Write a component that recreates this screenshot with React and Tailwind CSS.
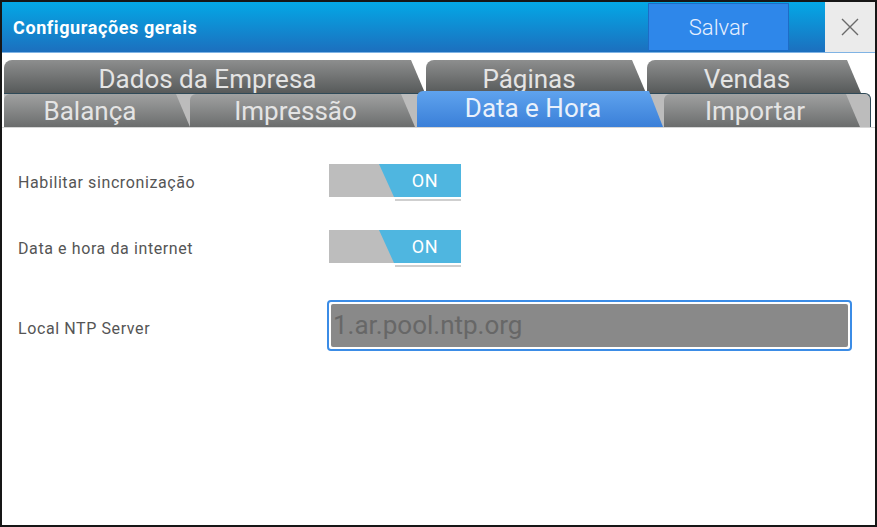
import React from "react";

const FONT = { fontFamily: "Roboto, 'Noto Sans', sans-serif" };

const backTabs = [
  { label: "Dados da Empresa", cls: "w-[421px]" },
  { label: "Páginas", cls: "w-[220px] ml-[1px]" },
  { label: "Vendas", cls: "w-[214px] ml-[1px]" },
];

const frontTabs = [
  { label: "Balança", cls: "w-[186px]" },
  { label: "Impressão", cls: "w-[225px]" },
  { label: "Data e Hora", cls: "w-[246px] ml-[2px]", active: true },
  { label: "Importar", cls: "w-[196px] ml-[1px]" },
];

const SLANT =
  "[clip-path:polygon(0_0,calc(100%_-_14px)_0,100%_100%,0_100%)] pr-[14px]";

const Toggle = () => (
  <div className="flex flex-col">
    <div className="relative w-[132px] h-[33px] bg-[#bdbdbd]">
      <div className="absolute inset-0 bg-[#4fb6e0] [clip-path:polygon(50px_0,100%_0,100%_100%,65px_100%)] flex items-center justify-center pl-[60px] text-[18px] text-white">
        ON
      </div>
    </div>
    <div className="ml-[66px] mt-[2px] w-[66px] h-[2px] bg-[#cfcfcf]" />
  </div>
);

export default function App() {
  return (
    <div
      className="w-[877px] h-[527px] bg-[#161616] p-[2px] flex flex-col overflow-hidden"
      style={FONT}
    >
      {/* cabeçalho */}
      <header className="h-[50px] flex shrink-0 bg-[linear-gradient(#03a8e6,#1c6fbe)]">
        <div className="flex-1 flex items-center pl-[11px] text-white font-bold text-[18px] tracking-[0.6px]">
          Configurações gerais
        </div>
        <button className="mt-[1px] w-[141px] h-[48px] bg-[#2e87ea] border border-[#1d6cc6] text-[22px] font-light text-[#e6f0ff]">
          Salvar
        </button>
        <div className="ml-[36px] w-[50px] bg-[#ebebeb] flex items-center justify-center">
          <svg width="22" height="22" viewBox="0 0 22 22">
            <path
              d="M3 3 L19 19 M19 3 L3 19"
              stroke="#6a6a6a"
              strokeWidth="1.4"
              fill="none"
            />
          </svg>
        </div>
      </header>

      <div className="flex-1 bg-white flex flex-col border-t border-[#7fb3e4]">
        {/* abas de trás */}
        <div className="flex h-[33px] mt-[7px] pl-[2px]">
          {backTabs.map((t) => (
            <div
              key={t.label}
              className={`${t.cls} ${SLANT} h-[33px] rounded-tl-[8px] bg-[linear-gradient(#8d8e8e,#575a5a)] text-[#e4e4e4] text-[26px] leading-[33px] pt-[3px] text-center overflow-hidden`}
            >
              {t.label}
            </div>
          ))}
        </div>

        {/* abas da frente */}
        <div className="flex items-end h-[34px] ml-[2px] w-[867px] bg-[#bcbcbc] border-t border-r border-[#2f4a58] rounded-tr-[6px]">
          {frontTabs.map((t) => (
            <div
              key={t.label}
              className={`${t.cls} ${SLANT} rounded-tl-[6px] text-[26px] text-center overflow-hidden ${
                t.active
                  ? "h-[36px] leading-[34px] bg-[linear-gradient(#5fa3ee,#3a7fd8)] text-[#eaf1fb]"
                  : "h-[33px] leading-[33px] pt-[1px] bg-[linear-gradient(#a0a1a1,#6b6d6d)] text-[#e4e4e4]"
              }`}
            >
              {t.label}
            </div>
          ))}
        </div>

        {/* conteúdo */}
        <div className="flex-1 flex flex-col border-t border-[#d6d6d6] pl-[16px] pt-[36px] text-[16px] tracking-[0.6px] text-[#555]">
          <div className="flex items-center">
            <span className="w-[311px]">Habilitar sincronização</span>
            <Toggle />
          </div>
          <div className="flex items-center mt-[29px]">
            <span className="w-[311px]">Data e hora da internet</span>
            <Toggle />
          </div>
          <div className="flex items-center mt-[33px]">
            <span className="w-[309px] pt-[6px]">Local NTP Server</span>
            <div className="w-[525px] h-[51px] border-2 border-[#3b8ce6] rounded-[4px] p-[2px] bg-white tracking-normal">
              <div className="h-full bg-[#898989] rounded-[2px] pl-[2px] flex items-center text-[26px] text-[#676767]">
                1.ar.pool.ntp.org
              </div>
            </div>
          </div>
        </div>
      </div>
    </div>
  );
}
